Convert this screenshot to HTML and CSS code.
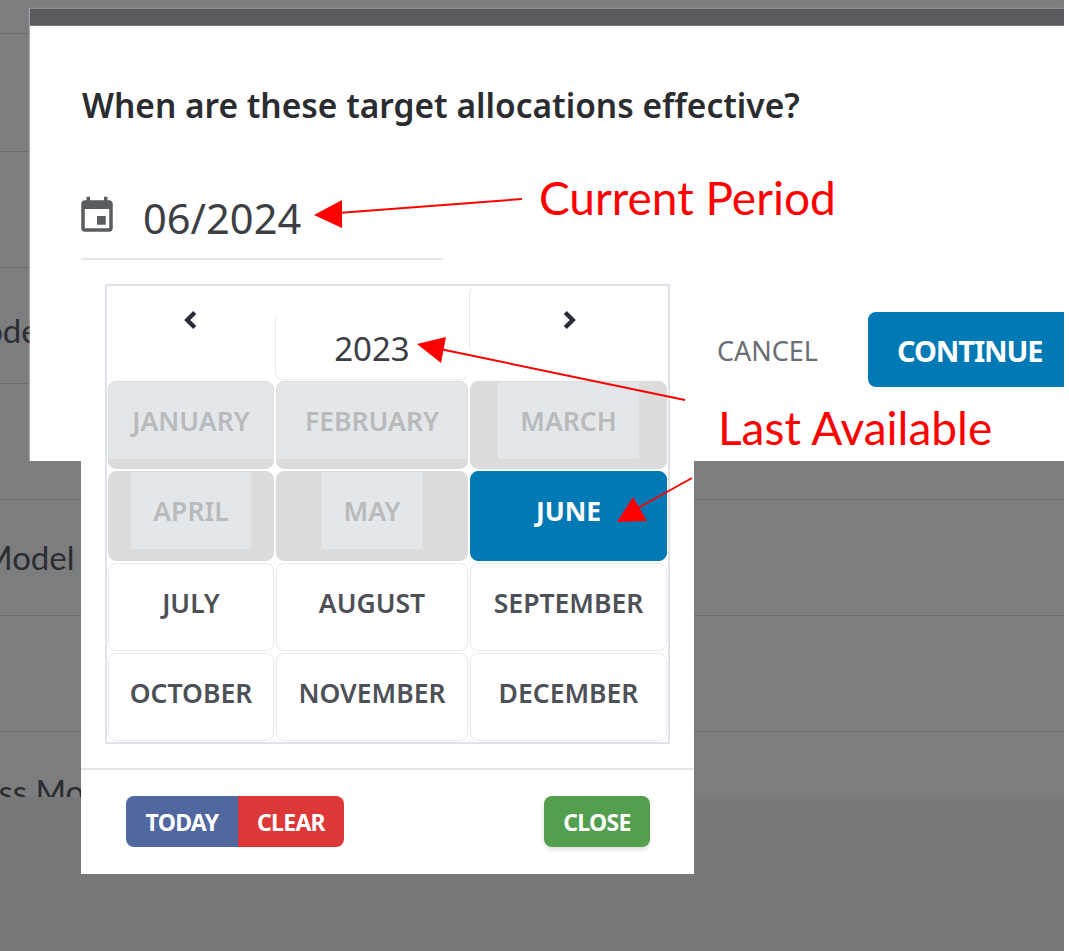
FILE: index.html
```html
<!DOCTYPE html>
<html lang="en">
<head>
<meta charset="utf-8">
<title>Target allocations</title>
<link rel="stylesheet" href="styles.css">
</head>
<body>
<div class="stage">
  <div class="rows">
    <div class="row row-a"></div>
    <div class="row row-first"></div>
    <div class="row row-b"></div>
    <div class="row row-b row-ode"><span>Model</span></div>
    <div class="row row-b"></div>
    <div class="row row-b row-model"><span>Model</span></div>
    <div class="row row-b"></div>
    <div class="row row-c row-ss"><span>Business Model</span></div>
  </div>

  <div class="modal">
    <div class="modal-bar"></div>
    <div class="modal-body">
      <h2 class="title">When are these target allocations effective?</h2>
      <div class="date-field">
        <svg class="cal-icon" viewBox="0 0 24 24"><path d="M17 12h-5v5h5v-5zM16 1v2H8V1H6v2H5c-1.11 0-1.99.9-1.99 2L3 19c0 1.1.89 2 2 2h14c1.1 0 2-.9 2-2V5c0-1.1-.9-2-2-2h-1V1h-2zm3 18H5V8h14v11z"/></svg>
        <span class="date-value">06/2024</span>
      </div>
      <div class="modal-actions">
        <span class="cancel">CANCEL</span>
        <span class="continue">CONTINUE</span>
      </div>
    </div>
  </div>

  <div class="popup">
    <div class="months">
      <div class="nav nav-prev"><svg class="chev" viewBox="0 0 12 16"><path d="M9 2 3 8l6 6"/></svg></div>
      <div class="year">2023</div>
      <div class="nav nav-next"><svg class="chev" viewBox="0 0 12 16"><path d="m3 2 6 6-6 6"/></svg></div>

      <div class="month off"><span class="inner full">JANUARY</span></div>
      <div class="month off"><span class="inner full">FEBRUARY</span></div>
      <div class="month off"><span class="inner">MARCH</span></div>
      <div class="month off"><span class="inner">APRIL</span></div>
      <div class="month off"><span class="inner">MAY</span></div>
      <div class="month active"><span class="inner">JUNE</span></div>
      <div class="month"><span class="inner">JULY</span></div>
      <div class="month"><span class="inner">AUGUST</span></div>
      <div class="month"><span class="inner full">SEPTEMBER</span></div>
      <div class="month"><span class="inner full">OCTOBER</span></div>
      <div class="month"><span class="inner full">NOVEMBER</span></div>
      <div class="month"><span class="inner full">DECEMBER</span></div>
    </div>
    <div class="popup-footer">
      <div class="btn-group">
        <span class="btn btn-today">TODAY</span>
        <span class="btn btn-clear">CLEAR</span>
      </div>
      <span class="btn btn-close">CLOSE</span>
    </div>
  </div>

  <svg class="arrows" viewBox="0 0 1064 951">
    <line x1="522" y1="199" x2="338" y2="213"/>
    <polygon points="314,215 342,200 342,228"/>
    <line x1="685" y1="400" x2="440" y2="349"/>
    <polygon points="417,344 446,337 441,363"/>
    <line x1="692" y1="478" x2="638" y2="508"/>
    <polygon points="617,522 633,497 647,521"/>
  </svg>
  <span class="note note-current">Current Period</span>
  <span class="note note-last">Last Available</span>
</div>
</body>
</html>
```
FILE: styles.css
```css
* { box-sizing: border-box; }
html, body { margin: 0; padding: 0; background: #fff; }
body { font-family: "Noto Sans", sans-serif; }

.stage {
  position: relative;
  width: 1064px;
  height: 951px;
  overflow: hidden;
  background: #77787a;
}

/* dimmed table behind the dialog */
.rows { display: flex; flex-direction: column; background: #7c7d7f; height: 797px; }
.row { flex: none; border-bottom: 1px solid #6c6d6f; overflow: hidden; color: #2b2d31; font-family: "Lato", sans-serif; font-size: 33px; line-height: 40px; white-space: nowrap; }
.row-a { height: 34px; }
.row-first { height: 118px; }
.row-b { height: 116px; }
.row-c { height: 65px; border-bottom: 0; }
.row-ode { padding: 42px 0 0 0; }
.row-ode span { margin-left: -46px; }
.row-model { padding: 37px 0 0 0; }
.row-model span { margin-left: -18px; }
.row-ss { padding: 39px 0 0 0; }
.row-ss span { margin-left: -99px; }

/* dialog */
.modal {
  position: absolute;
  top: 8px;
  left: 30px;
  right: 0;
  height: 453px;
  overflow: hidden;
  background: #fff;
  box-shadow: -1px 0 1px rgba(255, 255, 255, .3);
}
.modal-bar { height: 18px; background: #5a5b5e; border-top: 1px solid #8a8b8d; border-bottom: 1px solid #77787a; }
.modal-body { padding: 59px 0 0 51px; }
.title { margin: 0 0 0 1px; font-size: 33.5px; line-height: 40px; font-weight: 600; color: #2a2c30; white-space: nowrap; }
.date-field {
  display: flex;
  align-items: center;
  width: 362px;
  height: 74px;
  margin-top: 61px;
  border-bottom: 2px solid #e3e5ea;
}
.cal-icon { width: 42px; height: 42px; margin: -12px 0 0 -5px; fill: #5a5d60; flex: none; }
.date-value { margin: -8px 0 0 25px; font-size: 41.6px; line-height: 50px; color: #3c3f43; }
.modal-actions { display: flex; justify-content: flex-end; align-items: center; margin-top: 52px; }
.cancel { margin: 2px 50px 0 0; font-size: 27px; color: #6b6e72; }
.continue {
  width: 204px;
  height: 75px;
  margin-right: -8px;
  padding-left: 29px;
  border-radius: 8px;
  background: #0079b5;
  color: #fff;
  font-size: 29px;
  font-weight: 700;
  letter-spacing: -1.1px;
  line-height: 78px;
}

/* month picker */
.popup {
  position: absolute;
  top: 262px;
  left: 81px;
  width: 613px;
  height: 612px;
  padding-top: 22px;
  background: #fff;
}
.months {
  display: grid;
  grid-template-columns: 168px 194px 199px;
  grid-template-rows: 94px 90px 92px 90px 90px;
  width: 565px;
  margin-left: 24px;
  border: 2px solid #dfe2ea;
}
.nav { display: flex; align-items: center; justify-content: center; height: 68px; }
.nav-next { border: 1px solid transparent; border-left-color: #e8eaee; border-radius: 8px; }
.chev { width: 16px; height: 20px; fill: none; stroke: #252c38; stroke-width: 3.5; }
.year {
  margin-top: 27px;
  border: 1px solid transparent;
  border-left-color: #e8eaee;
  border-bottom-color: #e8eaee;
  border-radius: 8px;
  color: #3b3e44;
  font-size: 33px;
  line-height: 70px;
  text-align: center;
}
.month {
  overflow: hidden;
  margin: 1px;
  border: 1px solid #e8eaee;
  border-radius: 8px;
  color: #4d5157;
  font-size: 26.5px;
  font-weight: 600;
  line-height: 75px;
  text-align: center;
}
.inner { display: inline-block; padding: 2px 22px 0; }
.inner.full { display: block; padding: 2px 0 0; }
.month.off { border-color: #dcdcdc; background: #dcdcdc; color: #b9babc; }
.month.off .inner { background: #e4e7e9; }
.month.active { border-color: #0079b5; background: #0079b5; color: #fff; font-weight: 700; }

.popup-footer {
  display: flex;
  justify-content: space-between;
  height: 106px;
  margin-top: 24px;
  padding: 26px 44px 0 45px;
  border-top: 2px solid #e2e5ea;
}
.btn-group { display: flex; }
.btn { height: 51px; color: #fff; font-size: 23px; font-weight: 700; letter-spacing: -.7px; line-height: 53px; text-align: center; }
.btn-today { width: 112px; border-radius: 8px 0 0 8px; background: #5067a0; }
.btn-clear { width: 106px; border-radius: 0 8px 8px 0; background: #dc3838; }
.btn-close { width: 106px; border-radius: 8px; background: #549e50; box-shadow: 0 3px 4px rgba(0, 0, 0, .12); }

/* red annotations */
.arrows { position: absolute; top: 0; left: 0; width: 1064px; height: 951px; }
.arrows line { stroke: #f00; stroke-width: 2; }
.arrows polygon { fill: #f00; }
.note { position: absolute; color: #f00; font-family: "Lato", sans-serif; font-size: 46px; line-height: 56px; white-space: nowrap; }
.note-current { top: 170px; left: 539px; }
.note-last { top: 400px; left: 718px; }
```
